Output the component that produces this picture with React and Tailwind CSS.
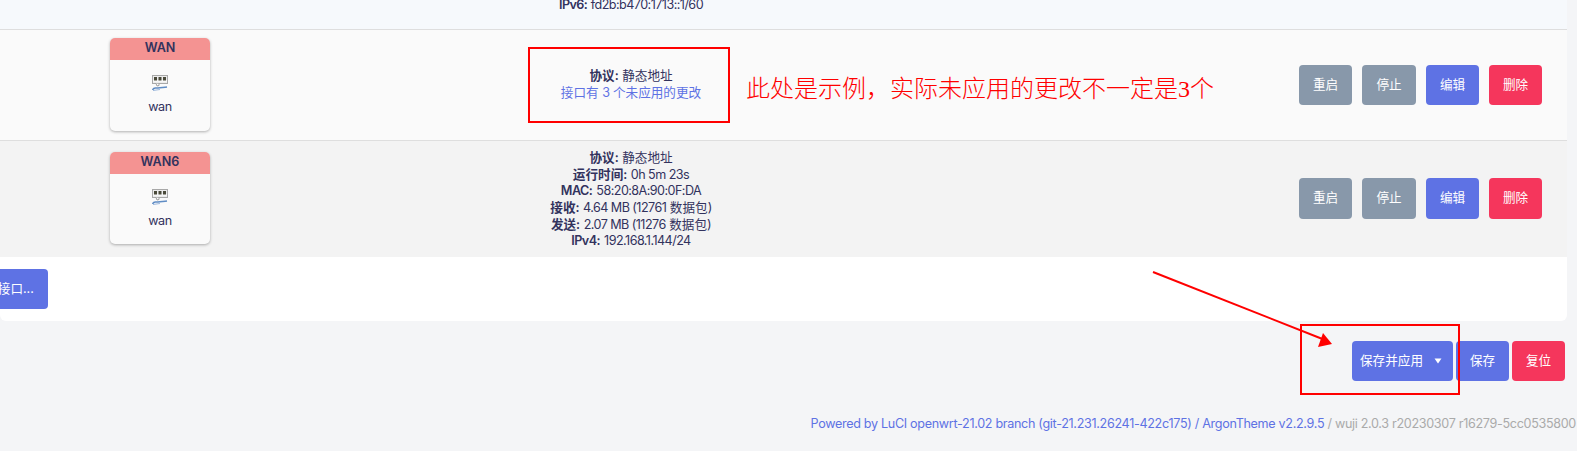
const cjk = '"Inter", "Noto Sans CJK SC", sans-serif';

function Btn({ children, color, className = "" }) {
  return (
    <button className={`rounded-[4px] text-white text-[12.6px] leading-none whitespace-nowrap ${color} ${className}`}>
      {children}
    </button>
  );
}

function PortIcon() {
  return (
    <svg width="16" height="16" viewBox="0 0 16 16" className="block">
      <rect x="0.5" y="0.5" width="15" height="8" fill="#ececec" stroke="#a8a8a8" />
      <rect x="1" y="5.5" width="14" height="1" fill="#fff" />
      <rect x="2" y="2" width="3" height="3.5" fill="#4a4a3a" />
      <rect x="6.5" y="2" width="3" height="3.5" fill="#4a4a3a" />
      <rect x="11" y="2" width="3" height="3.5" fill="#4a4a3a" />
      <path d="M4 8.5 L5 11 L7 10.5 L7 9" fill="#fff" stroke="#888" strokeWidth="0.8" />
      <path d="M0.5 15 C2 11.5 3.5 13.5 6 13 C9 12.5 12 12.5 15 12" fill="none" stroke="#5f8cc4" strokeWidth="1.6" />
      <path d="M1 15.5 L8 14.5" stroke="#9db8dc" strokeWidth="1" />
    </svg>
  );
}

function IfaceCard({ name, h }) {
  return (
    <div className={`w-[100px] ${h} rounded-[5px] overflow-hidden bg-[#fafafa] shadow-[0_1px_3px_rgba(0,0,0,0.3)] flex flex-col items-center`}>
      <div className="w-full h-[22px] bg-[#f49392] text-[#32325d] text-[12.6px] font-semibold leading-[20px] text-center">{name}</div>
      <div className="mt-[15px]"><PortIcon /></div>
      <div className="mt-[7px] text-[12.6px] leading-[17px] text-[#32325d] tracking-[-0.4px]">wan</div>
    </div>
  );
}

function Row({ className, children, name, cardH, btnH, cardShift, btnShift }) {
  return (
    <div className={`flex items-center border-b border-[#dedede] ${className}`}>
      <div className={`w-[320px] flex justify-center ${cardShift}`}><IfaceCard name={name} h={cardH} /></div>
      <div className="w-[622px] text-center text-[12.6px] leading-[16.7px] text-[#32325d]">{children}</div>
      <div className={`flex-1 flex justify-end gap-[10px] pr-[25px] ${btnShift}`}>
        <Btn color="bg-[#8898aa]" className={`w-[53px] ${btnH}`}>重启</Btn>
        <Btn color="bg-[#8898aa]" className={`w-[54px] ${btnH}`}>停止</Btn>
        <Btn color="bg-[#5e72e4]" className={`w-[53px] ${btnH}`}>编辑</Btn>
        <Btn color="bg-[#f5365c]" className={`w-[53px] ${btnH}`}>删除</Btn>
      </div>
    </div>
  );
}

function T({ children }) {
  return <span className="tracking-[-0.55px]">{children}</span>;
}

function Line({ k, v }) {
  return <div><strong className="font-semibold">{k}:</strong> {v}</div>;
}

export default function App() {
  return (
    <div lang="zh-CN" className="relative w-[1577px] h-[451px] overflow-hidden bg-[#f4f5f7]" style={{ fontFamily: cjk }}>
      <div className="w-[1567px] h-[321px] bg-white rounded-br-[6px] rounded-bl-[6px] overflow-hidden">
        <div className="h-[30px] bg-[#f6f9fc] border-b border-[#dedede] flex">
          <div className="w-[320px]" />
          <div className="w-[622px] h-[14px] flex items-end justify-center text-[12.6px] leading-[16.7px] text-[#32325d]">
            <div className="whitespace-nowrap"><strong className="font-semibold"><T>IPv6:</T></strong> <T>fd2b:b470:1713::1/60</T></div>
          </div>
        </div>
        <Row name="WAN" cardH="h-[93px]" btnH="h-[40px]" cardShift="-mt-[1px]" btnShift="" className="h-[111px] bg-[#fafafa]">
          <Line k="协议" v="静态地址" />
          <div className="text-[#5e72e4]">接口有 <T>3</T> 个未应用的更改</div>
        </Row>
        <Row name="WAN6" cardH="h-[92px]" btnH="h-[41px]" cardShift="-mt-[3px]" btnShift="-mt-[1px]" className="h-[116px] bg-[#f3f3f3] border-b-0">
          <div className="pt-[2px]">
            <Line k="协议" v="静态地址" />
            <Line k="运行时间" v={<T>0h 5m 23s</T>} />
            <Line k={<T>MAC</T>} v={<T>58:20:8A:90:0F:DA</T>} />
            <Line k="接收" v={<><T>4.64 MB (12761</T> 数据包<T>)</T></>} />
            <Line k="发送" v={<><T>2.07 MB (11276</T> 数据包<T>)</T></>} />
            <Line k={<T>IPv4</T>} v={<T>192.168.1.144/24</T>} />
          </div>
        </Row>
        <div className="pt-[12px]">
          <Btn color="bg-[#5e72e4]" className="h-[40px] px-[14px] -ml-[54px]">添加新接口...</Btn>
        </div>
      </div>

      <div className="flex justify-end gap-[3px] pt-[20px] pr-[12px]">
        <button className="h-[40px] w-[101px] px-[8px] rounded-[4px] bg-[#5e72e4] text-white text-[12.6px] flex items-center justify-between whitespace-nowrap">
          <span>保存并应用</span>
          <svg width="8" height="6" viewBox="0 0 8 6" className="mr-[3px]"><path d="M0.5 0.5H7.5L4 5.5Z" fill="#fff" /></svg>
        </button>
        <Btn color="bg-[#5e72e4]" className="h-[40px] w-[53px]">保存</Btn>
        <Btn color="bg-[#f5365c]" className="h-[40px] w-[53px]">复位</Btn>
      </div>

      <div className="mt-[33px] pr-[1px] flex justify-end text-[12.6px] leading-[20px] whitespace-nowrap tracking-[-0.32px]">
        <span className="text-[#5e72e4]">Powered by LuCI openwrt-21.02 branch (git-21.231.26241-422c175) / ArgonTheme v2.2.9.5</span>
        <span className="text-[#aaaaaa]">&nbsp;/ wuji 2.0.3 r20230307 r16279-5cc0535800</span>
      </div>

      {/* screenshot annotations */}
      <div className="absolute left-[528px] top-[47px] w-[202px] h-[76px] border-2 border-[#ff0000]" />
      <div className="absolute left-[1300px] top-[324px] w-[160px] h-[71px] border-2 border-[#ff0000]" />
      <div
        className="absolute left-[746px] top-[73px] text-[24px] leading-[32px] font-light text-[#ff0000] whitespace-nowrap"
        style={{ fontFamily: '"Liberation Serif", "Noto Sans CJK SC", serif' }}
      >
        此处是示例，实际未应用的更改不一定是3个
      </div>
      <svg className="absolute left-[1150px] top-[268px]" width="190" height="85" viewBox="0 0 190 85">
        <path d="M3 4 L175 72" stroke="#ff0000" strokeWidth="2" fill="none" />
        <path d="M182 76 L173 65 L168 79 Z" fill="#ff0000" />
      </svg>
    </div>
  );
}
